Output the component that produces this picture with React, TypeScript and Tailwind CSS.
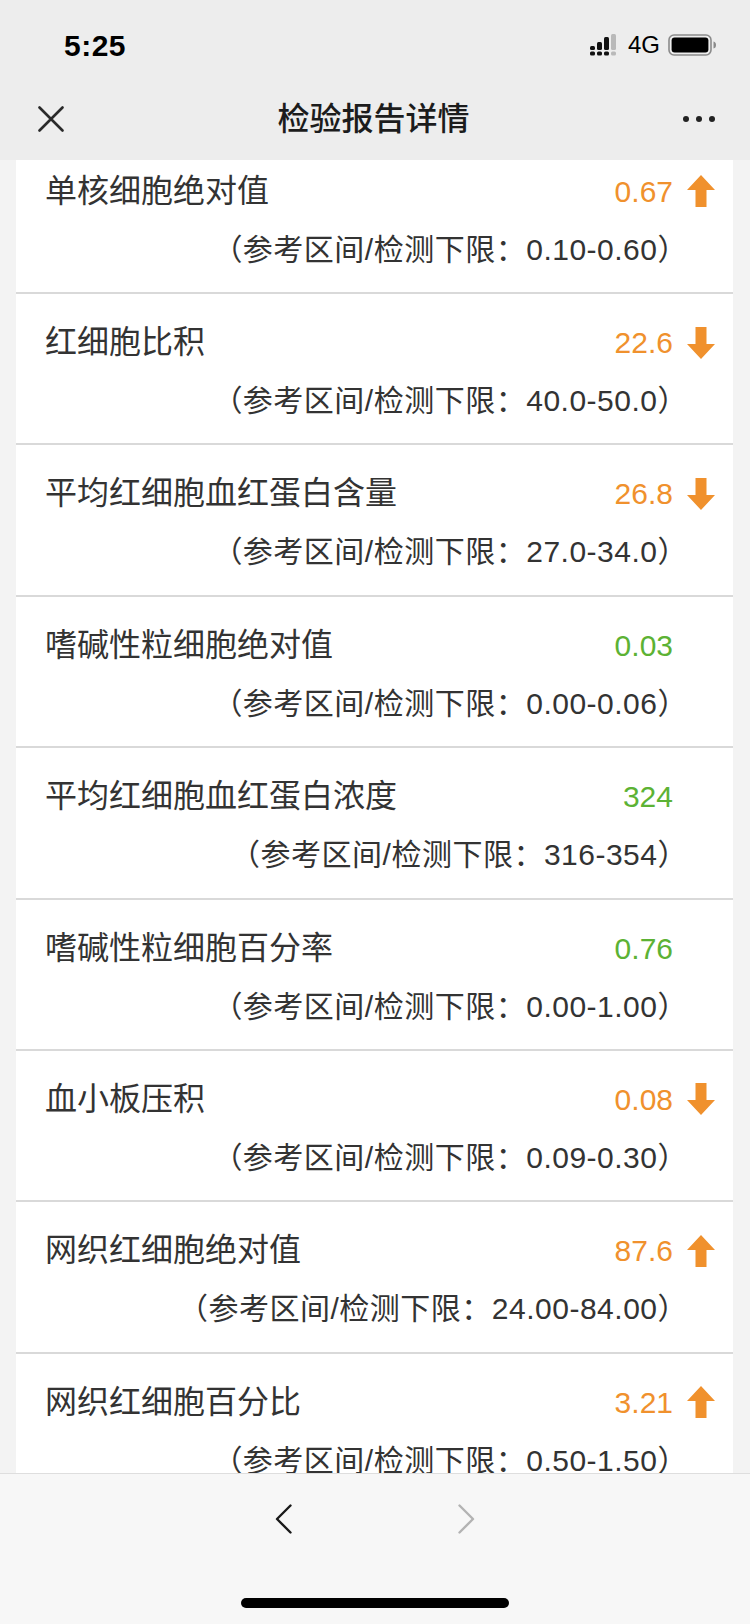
import React from "react";

type Row = { name: string; value: string; ref: string; flag: "up" | "down" | "none" };

const rows: Row[] = [
  { name: "单核细胞绝对值", value: "0.67", ref: "0.10-0.60", flag: "up" },
  { name: "红细胞比积", value: "22.6", ref: "40.0-50.0", flag: "down" },
  { name: "平均红细胞血红蛋白含量", value: "26.8", ref: "27.0-34.0", flag: "down" },
  { name: "嗜碱性粒细胞绝对值", value: "0.03", ref: "0.00-0.06", flag: "none" },
  { name: "平均红细胞血红蛋白浓度", value: "324", ref: "316-354", flag: "none" },
  { name: "嗜碱性粒细胞百分率", value: "0.76", ref: "0.00-1.00", flag: "none" },
  { name: "血小板压积", value: "0.08", ref: "0.09-0.30", flag: "down" },
  { name: "网织红细胞绝对值", value: "87.6", ref: "24.00-84.00", flag: "up" },
  { name: "网织红细胞百分比", value: "3.21", ref: "0.50-1.50", flag: "up" },
];

function Arrow({ dir }: { dir: "up" | "down" }) {
  return (
    <svg width="28" height="32" viewBox="0 0 28 32">
      {dir === "up" ? (
        <path d="M14 0 L28 15 L19.5 15 L19.5 32 L8.5 32 L8.5 15 L0 15 Z" fill="#f0912d" />
      ) : (
        <path d="M14 32 L28 17 L19.5 17 L19.5 0 L8.5 0 L8.5 17 L0 17 Z" fill="#f0912d" />
      )}
    </svg>
  );
}

function Signal() {
  return (
    <svg width="30" height="22" viewBox="0 0 30 22">
      <rect x="0" y="12" width="5" height="4" rx="1.5" fill="#111" />
      <rect x="0" y="17.5" width="5" height="4" rx="1.5" fill="#111" />
      <rect x="7" y="8" width="5" height="8" rx="1.5" fill="#111" />
      <rect x="7" y="17.5" width="5" height="4" rx="1.5" fill="#111" />
      <rect x="14" y="3" width="5" height="13" rx="1.5" fill="#111" />
      <rect x="14" y="17.5" width="5" height="4" rx="1.5" fill="#111" />
      <rect x="21" y="0" width="5" height="16" rx="1.5" fill="#b9b9b9" />
      <rect x="21" y="17.5" width="5" height="4" rx="1.5" fill="#b9b9b9" />
    </svg>
  );
}

function Battery() {
  return (
    <svg width="50" height="22" viewBox="0 0 50 22">
      <rect x="1" y="1" width="42" height="20" rx="5" fill="none" stroke="#8a8a8a" strokeWidth="1.6" />
      <rect x="3.6" y="3.6" width="36.8" height="14.8" rx="3" fill="#000" />
      <path d="M45.5 7.5 Q48 8 48 11 Q48 14 45.5 14.5 Z" fill="#8a8a8a" />
    </svg>
  );
}

export default function App() {
  return (
    <div className="w-[750px] h-[1624px] flex flex-col bg-[#f3f3f3] font-['Liberation_Sans','Noto_Sans_CJK_SC',sans-serif] overflow-hidden">
      {/* header */}
      <div className="bg-[#ededed] shrink-0">
        <div className="h-[90px] flex items-center justify-between pl-[64px] pr-[32px]">
          <span className="text-[30px] font-bold text-black tracking-[0.5px]">5:25</span>
          <div className="flex items-center">
            <Signal />
            <span className="ml-[8px] text-[24px] text-black leading-none">4G</span>
            <span className="ml-[8px] flex"><Battery /></span>
          </div>
        </div>
        <div className="h-[70px] pb-[12px] flex items-center justify-between pl-[38px] pr-[35px]">
          <svg width="26" height="26" viewBox="0 0 26 26">
            <path d="M1.5 1.5 L24.5 24.5 M24.5 1.5 L1.5 24.5" stroke="#2a2a2a" strokeWidth="2.6" strokeLinecap="round" />
          </svg>
          <span className="text-[32px] font-medium text-[#1c1c1c] leading-none">检验报告详情</span>
          <div className="flex items-center gap-[7px] w-[32px]">
            <span className="w-[6px] h-[6px] rounded-full bg-[#222]" />
            <span className="w-[6px] h-[6px] rounded-full bg-[#222]" />
            <span className="w-[6px] h-[6px] rounded-full bg-[#222]" />
          </div>
        </div>
      </div>

      {/* list */}
      <div className="flex-1 overflow-hidden">
        <div className="ml-[16px] mr-[17px] bg-white -mt-[17.4px]">
          {rows.map((r, i) => {
            const color = r.flag === "none" ? "text-[#5cb234]" : "text-[#f0912d]";
            return (
              <div key={i} className="h-[151.4px] border-b-2 border-[#d9d9d9] pt-[28px] flex flex-col">
                <div className="h-[41px] flex items-center justify-between pl-[29px] pr-[18px]">
                  <span className="text-[32px] leading-[41px] text-[#333]">{r.name}</span>
                  <div className="flex items-center">
                    <span className={`text-[30px] leading-[41px] ${color}`}>{r.value}</span>
                    <div className="w-[28px] h-[32px] ml-[14px] flex">
                      {r.flag !== "none" && <Arrow dir={r.flag} />}
                    </div>
                  </div>
                </div>
                <div className="mt-[20px] text-right pr-[45px] text-[30px] tracking-[0.5px] leading-[36px] text-[#333]">
                  （参考区间/检测下限：{r.ref}）
                </div>
              </div>
            );
          })}
        </div>
      </div>

      {/* toolbar */}
      <div className="h-[151px] shrink-0 bg-[#f7f7f7] border-t border-[#dedede] flex flex-col items-center">
        <div className="mt-[30px] flex gap-[166px]">
          <svg width="17" height="30" viewBox="0 0 17 30">
            <path d="M15.5 1.5 L2 15 L15.5 28.5" fill="none" stroke="#1a1a1a" strokeWidth="2.4" strokeLinecap="round" strokeLinejoin="round" />
          </svg>
          <svg width="17" height="30" viewBox="0 0 17 30">
            <path d="M1.5 1.5 L15 15 L1.5 28.5" fill="none" stroke="#b3b3b3" strokeWidth="2.4" strokeLinecap="round" strokeLinejoin="round" />
          </svg>
        </div>
        <div className="mt-[64px] w-[268px] h-[10px] rounded-full bg-black" />
      </div>
    </div>
  );
}
